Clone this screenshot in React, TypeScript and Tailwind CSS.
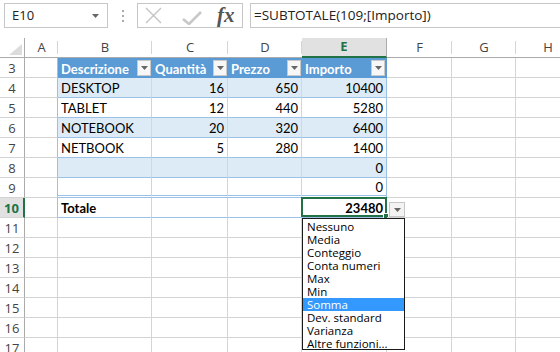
import React from "react";

const COLS = ["A", "B", "C", "D", "E", "F", "G", "H"];
const ROWS = [3, 4, 5, 6, 7, 8, 9, 10, 11, 12, 13, 14, 15, 16, 17];

type Val = { text: string; right?: boolean; bold?: boolean };

const data: Record<number, (Val | null)[]> = {
  4: [{ text: "DESKTOP" }, { text: "16", right: true }, { text: "650", right: true }, { text: "10400", right: true }],
  5: [{ text: "TABLET" }, { text: "12", right: true }, { text: "440", right: true }, { text: "5280", right: true }],
  6: [{ text: "NOTEBOOK" }, { text: "20", right: true }, { text: "320", right: true }, { text: "6400", right: true }],
  7: [{ text: "NETBOOK" }, { text: "5", right: true }, { text: "280", right: true }, { text: "1400", right: true }],
  8: [null, null, null, { text: "0", right: true }],
  9: [null, null, null, { text: "0", right: true }],
  10: [{ text: "Totale", bold: true }, null, null, { text: "23480", right: true, bold: true }],
};

const headers = ["Descrizione", "Quantità", "Prezzo", "Importo"];

const menu = [
  "Nessuno",
  "Media",
  "Conteggio",
  "Conta numeri",
  "Max",
  "Min",
  "Somma",
  "Dev. standard",
  "Varianza",
  "Altre funzioni...",
];

const cellFont = { fontFamily: "Lato, 'Liberation Sans', sans-serif" };
const uiFont = { fontFamily: "'Open Sans', 'Noto Sans', sans-serif" };

function Caret({ className = "" }: { className?: string }) {
  return (
    <svg width="7" height="4" viewBox="0 0 7 4" className={className}>
      <path d="M0 0 L7 0 L3.5 4 Z" fill="#666" />
    </svg>
  );
}

function FilterButton() {
  return (
    <div className="absolute right-[1px] top-[2px] w-[14px] h-[16px] bg-[#f7f7f7] border border-[#c9c9c9] flex items-center justify-center">
      <Caret />
    </div>
  );
}

function Toolbar() {
  return (
    <div className="h-[38px] flex items-start pt-[3px] pl-[4px] bg-white" style={uiFont}>
      {/* Name box */}
      <div className="w-[104px] h-[25px] border border-[#c6c6c6] flex items-center justify-between pl-[7px] pr-[8px] text-[13px] text-[#222]">
        <span>E10</span>
        <Caret />
      </div>
      <div className="w-[29px] h-[25px] flex flex-col items-center justify-center gap-[3px]">
        <span className="w-[2px] h-[2px] bg-[#aaa]" />
        <span className="w-[2px] h-[2px] bg-[#aaa]" />
        <span className="w-[2px] h-[2px] bg-[#aaa]" />
      </div>
      {/* Formula icons */}
      <div className="w-[106px] h-[25px] border border-[#c6c6c6] flex items-center pl-[7px]">
        <svg width="17" height="17" viewBox="0 0 17 17">
          <path d="M1 1 L16 16 M16 1 L1 16" stroke="#c4c4c4" strokeWidth="1.4" />
        </svg>
        <svg width="20" height="14" viewBox="0 0 20 14" className="ml-[20px] mt-[4px]">
          <path d="M1 8 L7 13 L19 1" stroke="#c8c8c8" strokeWidth="2.6" fill="none" />
        </svg>
        <span
          className="ml-[15px] text-[21px] italic font-bold text-[#555] leading-none"
          style={{ fontFamily: "'Liberation Serif', serif" }}
        >
          fx
        </span>
      </div>
      <div className="ml-[7px] flex-1 h-[25px] border-y border-l border-[#c6c6c6] flex items-center pl-[3px] text-[13.5px] text-[#222]">
        =SUBTOTALE(109;[Importo])
      </div>
    </div>
  );
}

function Cell({ r, c }: { r: number; c: number }) {
  const inTable = r >= 3 && r <= 10 && c >= 1 && c <= 4;
  const header = inTable && r === 3;
  const banded = inTable && (r === 4 || r === 6 || r === 8);
  const val = inTable && !header ? data[r]?.[c - 1] : null;

  let cls = "relative flex items-center pt-[2px] overflow-visible whitespace-nowrap text-[13px] ";
  if (header) {
    cls += "bg-[#5b9bd5] text-white font-bold pl-[3px] ";
    cls += c === 4 ? "border-r border-[#5b9bd5] " : "";
  } else if (inTable) {
    cls += banded ? "bg-[#ddebf7] " : "bg-white ";
    cls += r === 9 ? "border-b-[3px] border-double border-b-[#9bc2e6] " : "border-b border-b-[#9bc2e6] ";
    cls += c === 4 ? "border-r border-r-[#9bc2e6] " : banded ? "border-r border-r-[#c9d9e9] " : "border-r border-r-[#d4d4d4] ";
    cls += "px-[3px] text-black ";
  } else {
    cls += "border-b border-r border-[#d4d4d4] ";
    if (c === 0 && r >= 3 && r <= 10) cls += "border-r-[#9bc2e6] ";
  }

  return (
    <div className={cls} style={cellFont}>
      {header && (
        <>
          <span className="leading-none">{headers[c - 1]}</span>
          <FilterButton />
        </>
      )}
      {val && (
        <span className={`w-full leading-none ${val.right ? "text-right" : ""} ${val.bold ? "font-bold" : ""}`}>
          {val.text}
        </span>
      )}
      {r === 10 && c === 4 && (
        <div className="absolute -left-[1px] -top-[1px] right-[-1px] -bottom-[0px] border-2 border-[#217346] pointer-events-none">
          <div className="absolute -right-[4px] -bottom-[4px] w-[6px] h-[6px] bg-[#217346] border border-white" />
        </div>
      )}
    </div>
  );
}

export default function App() {
  return (
    <div className="w-[560px] h-[352px] overflow-hidden bg-white">
      <Toolbar />
      <div className="relative">
        <div
          className="grid grid-cols-[25px_33px_94px_76px_74px_85px_65px_64px_64px] auto-rows-[20px] w-max"
          style={uiFont}
        >
          {/* corner */}
          <div className="relative border-r border-b border-[#ababab] bg-white">
            <svg width="13" height="11" viewBox="0 0 13 11" className="absolute left-[9px] top-[6px]">
              <path d="M13 0 L13 11 L0 11 Z" fill="#dcdcdc" />
            </svg>
          </div>
          {COLS.map((col) =>
            col === "E" ? (
              <div
                key={col}
                className="bg-[#e1e1e1] border-b-2 border-b-[#217346] border-r border-r-[#ababab] flex items-center justify-center text-[13px] font-bold text-[#217346]"
              >
                {col}
              </div>
            ) : (
              <div key={col} className="relative bg-white border-b border-[#ababab] flex items-center justify-center text-[13px] text-[#444]">
                <span className="absolute right-0 top-[3px] bottom-[3px] w-px bg-[#d4d4d4]" />
                {col}
              </div>
            )
          )}
          {ROWS.map((r) => (
            <React.Fragment key={r}>
              {r === 10 ? (
                <div className="bg-[#e1e1e1] border-r-2 border-r-[#217346] border-b border-b-[#d4d4d4] flex items-center justify-center pt-[2px] text-[13px] font-bold text-[#217346]">
                  {r}
                </div>
              ) : (
                <div className="bg-white border-r border-r-[#ababab] border-b border-b-[#d4d4d4] flex items-center justify-center pt-[2px] text-[13px] text-[#444]">
                  {r}
                </div>
              )}
              {COLS.map((_, c) => (
                <Cell key={c} r={r} c={c} />
              ))}
            </React.Fragment>
          ))}
        </div>

        {/* dropdown button next to E10 */}
        <div className="absolute left-[389px] top-[164px] w-[16px] h-[15px] bg-[#f3f3f3] border border-[#c6c6c6] flex items-center justify-center">
          <Caret />
        </div>

        {/* total function list */}
        <div
          className="absolute left-[302px] top-[180px] w-[103px] h-[132px] bg-white border border-[#1a1a1a] pt-[1px]"
          style={uiFont}
        >
          {menu.map((m) => (
            <div
              key={m}
              className={`h-[13px] leading-[13px] pl-[4px] text-[11.5px] whitespace-nowrap ${
                m === "Somma" ? "bg-[#3399ff] text-white" : "text-black"
              }`}
            >
              {m}
            </div>
          ))}
        </div>
      </div>
    </div>
  );
}
